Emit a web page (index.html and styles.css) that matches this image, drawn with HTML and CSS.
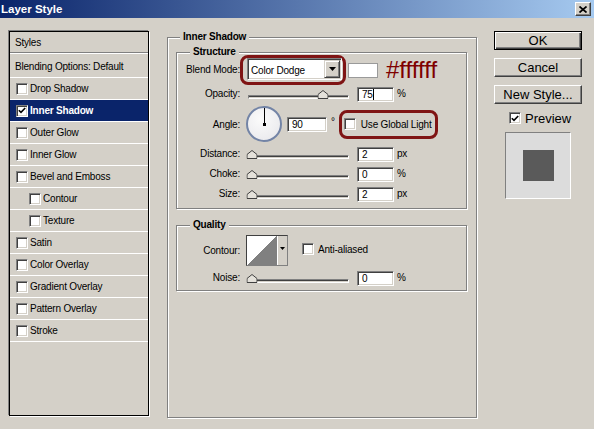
FILE: index.html
```html
<!DOCTYPE html>
<html lang="en">
<head>
    <meta charset="UTF-8">
    <meta name="viewport" content="width=device-width, initial-scale=1.0">
    <title>Layer Style</title>
    <link rel="stylesheet" href="styles.css">
</head>
<body>
    <div class="window">
        <div class="titlebar">
            <span class="title">Layer Style</span>
            <span class="close-btn">
                <svg width="8" height="7" viewBox="0 0 8 7"><path d="M0.5 0.5 L7.5 6.5 M7.5 0.5 L0.5 6.5" stroke="#000" stroke-width="1.7"/></svg>
            </span>
        </div>

        <div class="dialog">
            <!-- effect list -->
            <ul class="style-list">
                <li class="list-head">Styles</li>
                <li class="plain">Blending Options: Default</li>
                <li><span class="check"></span>Drop Shadow</li>
                <li class="selected">
                    <span class="check"><svg width="8" height="7" viewBox="0 0 8 7"><path d="M0.8 3.2 L3 5.4 L7.2 1" stroke="#000" stroke-width="1.6" fill="none"/></svg></span>Inner Shadow
                </li>
                <li><span class="check"></span>Outer Glow</li>
                <li><span class="check"></span>Inner Glow</li>
                <li><span class="check"></span>Bevel and Emboss</li>
                <li class="sub"><span class="check"></span>Contour</li>
                <li class="sub"><span class="check"></span>Texture</li>
                <li><span class="check"></span>Satin</li>
                <li><span class="check"></span>Color Overlay</li>
                <li><span class="check"></span>Gradient Overlay</li>
                <li><span class="check"></span>Pattern Overlay</li>
                <li><span class="check"></span>Stroke</li>
            </ul>

            <!-- settings of the selected effect -->
            <fieldset class="group effect-group">
                <legend>Inner Shadow</legend>

                <fieldset class="group sub-group">
                    <legend>Structure</legend>

                    <div class="row blend-row">
                        <span class="row-label">Blend Mode:</span>
                        <div class="marker mode-marker">
                            <div class="select">
                                <span class="select-value">Color Dodge</span>
                                <span class="drop-btn"><svg width="7" height="4" viewBox="0 0 7 4"><path d="M0 0 H7 L3.5 4 Z"/></svg></span>
                            </div>
                        </div>
                        <span class="swatch"></span>
                        <span class="hex">#ffffff</span>
                    </div>

                    <div class="row opacity-row">
                        <span class="row-label">Opacity:</span>
                        <div class="slider">
                            <div class="track"></div>
                            <div class="rail">
                                <span class="thumb" style="left: 75%"><svg width="11" height="9" viewBox="0 0 11 9"><path d="M5.5 0.5 L10.5 4.5 V8.5 H0.5 V4.5 Z" fill="#e4e1da" stroke="#404040"/></svg></span>
                            </div>
                        </div>
                        <span class="field">75<span class="caret"></span></span>
                        <span class="unit">%</span>
                    </div>

                    <div class="row angle-row">
                        <span class="row-label">Angle:</span>
                        <div class="dial"><span class="hand"></span><span class="pivot"></span></div>
                        <span class="field angle-field">90</span>
                        <span class="deg">°</span>
                        <div class="marker light-marker">
                            <span class="check"></span>Use Global Light
                        </div>
                    </div>

                    <div class="row">
                        <span class="row-label">Distance:</span>
                        <div class="slider">
                            <div class="track"></div>
                            <div class="rail">
                                <span class="thumb" style="left: 0%"><svg width="11" height="9" viewBox="0 0 11 9"><path d="M5.5 0.5 L10.5 4.5 V8.5 H0.5 V4.5 Z" fill="#e4e1da" stroke="#404040"/></svg></span>
                            </div>
                        </div>
                        <span class="field">2</span>
                        <span class="unit">px</span>
                    </div>

                    <div class="row">
                        <span class="row-label">Choke:</span>
                        <div class="slider">
                            <div class="track"></div>
                            <div class="rail">
                                <span class="thumb" style="left: 0%"><svg width="11" height="9" viewBox="0 0 11 9"><path d="M5.5 0.5 L10.5 4.5 V8.5 H0.5 V4.5 Z" fill="#e4e1da" stroke="#404040"/></svg></span>
                            </div>
                        </div>
                        <span class="field">0</span>
                        <span class="unit">%</span>
                    </div>

                    <div class="row">
                        <span class="row-label">Size:</span>
                        <div class="slider">
                            <div class="track"></div>
                            <div class="rail">
                                <span class="thumb" style="left: 0%"><svg width="11" height="9" viewBox="0 0 11 9"><path d="M5.5 0.5 L10.5 4.5 V8.5 H0.5 V4.5 Z" fill="#e4e1da" stroke="#404040"/></svg></span>
                            </div>
                        </div>
                        <span class="field">2</span>
                        <span class="unit">px</span>
                    </div>
                </fieldset>

                <fieldset class="group sub-group quality">
                    <legend>Quality</legend>

                    <div class="row contour-row">
                        <span class="row-label">Contour:</span>
                        <div class="contour-picker">
                            <span class="curve"></span>
                            <span class="curve-btn"><svg width="5" height="3" viewBox="0 0 5 3"><path d="M0 0 H5 L2.5 3 Z"/></svg></span>
                        </div>
                        <span class="option"><span class="check"></span>Anti-aliased</span>
                    </div>

                    <div class="row noise-row">
                        <span class="row-label">Noise:</span>
                        <div class="slider">
                            <div class="track"></div>
                            <div class="rail">
                                <span class="thumb" style="left: 0%"><svg width="11" height="9" viewBox="0 0 11 9"><path d="M5.5 0.5 L10.5 4.5 V8.5 H0.5 V4.5 Z" fill="#e4e1da" stroke="#404040"/></svg></span>
                            </div>
                        </div>
                        <span class="field">0</span>
                        <span class="unit">%</span>
                    </div>
                </fieldset>
            </fieldset>

            <!-- dialog buttons and preview -->
            <div class="actions">
                <span class="btn btn-default">OK</span>
                <span class="btn">Cancel</span>
                <span class="btn">New Style...</span>
                <div class="preview-toggle">
                    <span class="check"><svg width="8" height="7" viewBox="0 0 8 7"><path d="M0.8 3.2 L3 5.4 L7.2 1" stroke="#000" stroke-width="1.6" fill="none"/></svg></span>Preview
                </div>
                <div class="preview-box"><span class="preview-swatch"></span></div>
            </div>
        </div>
    </div>
</body>
</html>
```

FILE: styles.css
```css
body {
    margin: 0;
    background-color: #d4d0c8;
    font-family: "Liberation Sans", Arial, sans-serif;
    font-size: 10px;
    letter-spacing: -0.2px;
    color: #000;
}
.window {
    width: 594px;
    height: 429px;
    overflow: hidden;
}

/* title bar */
.titlebar {
    height: 18px;
    background: linear-gradient(to right, #0a246a, #a6caf0);
    display: flex;
    align-items: center;
    justify-content: space-between;
    padding: 0 3px 0 1px;
}
.title {
    color: #fff;
    font-weight: bold;
    font-size: 11.5px;
    letter-spacing: 0;
}
.close-btn {
    width: 16px;
    height: 14px;
    box-sizing: border-box;
    background-color: #d4d0c8;
    border: 1px solid;
    border-color: #fff #404040 #404040 #fff;
    box-shadow: inset -1px -1px 0 #808080;
    display: flex;
    align-items: center;
    justify-content: center;
}

.dialog {
    display: flex;
    align-items: flex-start;
    padding: 13px 0 0 9px;
}

/* effect list */
.style-list {
    list-style: none;
    margin: 0;
    padding: 0;
    width: 140px;
    height: 385px;
    box-sizing: border-box;
    border: 1px solid #000;
    box-shadow: -1px -1px 0 #808080, 1px 1px 0 #fff;
}
.style-list li {
    display: flex;
    align-items: center;
    gap: 2px;
    height: 22px;
    box-sizing: border-box;
    border-bottom: 1px solid #fff;
    padding-left: 6px;
    white-space: nowrap;
}
.style-list .list-head {
    height: 21px;
    border-bottom-color: #808080;
    box-shadow: 0 1px 0 #fff;
    margin-bottom: 3px;
    padding-left: 5px;
}
.style-list .plain {
    padding-left: 5px;
}
.style-list .sub {
    padding-left: 19px;
}
.style-list .selected {
    background-color: #0a246a;
    color: #fff;
    font-weight: bold;
}

/* classic sunken checkbox */
.check {
    flex: none;
    width: 12px;
    height: 12px;
    box-sizing: border-box;
    background-color: #fff;
    border: 1px solid;
    border-color: #808080 #fff #fff #808080;
    box-shadow: inset 1px 1px 0 #404040, inset -1px -1px 0 #d4d0c8;
    display: inline-flex;
    align-items: center;
    justify-content: center;
}

/* group boxes */
.group {
    margin: 0;
    padding: 0;
    min-width: 0;
    border: 1px solid #808080;
    box-shadow: inset 1px 1px 0 #fff, 1px 1px 0 #fff;
}
.group legend {
    font-weight: bold;
    line-height: 12px;
    padding: 0 3px;
    margin-left: 13px;
    background-color: #d4d0c8;
}
.effect-group {
    margin-left: 18px;
    width: 310px;
    height: 387px;
    box-sizing: border-box;
    padding: 0 9px 0 8px;
}
.effect-group > legend {
    margin-left: 4px;
}
.sub-group {
    margin-top: 3px;
    padding-bottom: 5px;
}
.quality {
    margin-top: 10px;
    padding-bottom: 3px;
}

.row {
    display: flex;
    align-items: center;
    height: 20px;
}
.row-label {
    flex: none;
    width: 63px;
    text-align: right;
}
.blend-row {
    height: 22px;
}
.opacity-row {
    margin-top: 2px;
    height: 22px;
}
.angle-row {
    margin-top: 1px;
    height: 38px;
}

/* hand-drawn red outline */
.marker {
    box-sizing: border-box;
    border: 3px solid #7f1414;
    border-radius: 8px;
}
.mode-marker {
    margin: -3px 0 -5px;
    padding: 0 1px 2px 4px;
}
.light-marker {
    width: 99px;
    height: 29px;
    margin-left: 4px;
    padding-left: 2px;
    display: flex;
    align-items: center;
    gap: 5px;
    white-space: nowrap;
}

.select {
    width: 95px;
    height: 22px;
    box-sizing: border-box;
    background-color: #fff;
    border: 1px solid;
    border-color: #808080 #fff #fff #808080;
    box-shadow: inset 1px 1px 0 #404040, inset -1px -1px 0 #d4d0c8;
    display: flex;
    align-items: stretch;
    padding: 1px;
}
.select-value {
    flex: 1;
    padding: 5px 0 0 2px;
}
.drop-btn {
    width: 16px;
    box-sizing: border-box;
    background-color: #d4d0c8;
    border: 1px solid;
    border-color: #d4d0c8 #404040 #404040 #d4d0c8;
    box-shadow: inset 1px 1px 0 #fff, inset -1px -1px 0 #808080;
    display: flex;
    align-items: center;
    justify-content: center;
}
.swatch {
    align-self: flex-start;
    margin: 5px 0 0 2px;
    width: 30px;
    height: 15px;
    box-sizing: border-box;
    background-color: #fff;
    border: 1px solid #9a9a9a;
}
.hex {
    align-self: flex-start;
    margin: 1px 0 0 8px;
    font-size: 24px;
    line-height: 22px;
    letter-spacing: 0;
    color: #7f0000;
}

/* sliders */
.slider {
    position: relative;
    flex: none;
    width: 101px;
    height: 9px;
    margin: 2px 0 0 8px;
}
.track {
    margin-top: 5px;
    height: 4px;
    box-sizing: border-box;
    border: 1px solid;
    border-color: #808080 #fff #fff #808080;
    background-color: #404040;
    box-shadow: inset 0 -1px 0 #d4d0c8;
}
.rail {
    position: absolute;
    top: 0;
    left: 4px;
    right: 2px;
    height: 9px;
}
.thumb {
    position: absolute;
    top: 0;
    transform: translateX(-50%);
    line-height: 0;
}

/* edit fields */
.field {
    flex: none;
    width: 37px;
    height: 15px;
    margin: 2px 0 0 8px;
    box-sizing: border-box;
    background-color: #fff;
    border: 1px solid;
    border-color: #808080 #fff #fff #808080;
    box-shadow: inset 1px 1px 0 #404040, inset -1px -1px 0 #d4d0c8;
    padding-left: 4px;
    line-height: 13px;
    display: flex;
    align-items: center;
}
.caret {
    width: 1px;
    height: 11px;
    background-color: #000;
}
.unit {
    margin-left: 3px;
}

/* angle dial */
.dial {
    position: relative;
    flex: none;
    width: 36px;
    height: 36px;
    margin-left: 6px;
    box-sizing: border-box;
    border-radius: 50%;
    border: 2px solid #7384a6;
    background: radial-gradient(circle at 40% 35%, #fbfbfb, #e6e6ea);
}
.hand {
    position: absolute;
    left: 16px;
    top: 0;
    width: 1px;
    height: 16px;
    background-color: #000;
}
.pivot {
    position: absolute;
    left: 15px;
    top: 15px;
    width: 3px;
    height: 3px;
    background-color: #000;
}
.angle-field {
    width: 40px;
    margin: 1px 0 0 5px;
}
.deg {
    align-self: flex-start;
    margin: 11px 0 0 4px;
}

/* contour row */
.contour-row {
    margin-top: 3px;
    height: 32px;
}
.noise-row {
    margin-top: 1px;
}
.contour-picker {
    flex: none;
    display: flex;
    width: 42px;
    height: 31px;
    margin-left: 6px;
    box-sizing: border-box;
    border: 1px solid;
    border-color: #404040 #808080 #808080 #404040;
    background-color: #d4d0c8;
}
.curve {
    width: 30px;
    background: linear-gradient(to bottom right, #fff 50%, #808080 50%);
}
.curve-btn {
    flex: 1;
    border-left: 1px solid #fff;
    display: flex;
    align-items: center;
    justify-content: center;
    padding-bottom: 4px;
}
.option {
    display: flex;
    align-items: center;
    gap: 4px;
    margin: 0 0 2px 14px;
}

/* right hand column */
.actions {
    margin-left: 17px;
    width: 88px;
    font-size: 13px;
    letter-spacing: 0;
}
.btn {
    display: flex;
    align-items: center;
    justify-content: center;
    height: 19px;
    box-sizing: border-box;
    margin-bottom: 8px;
    background-color: #d4d0c8;
    border: 1px solid;
    border-color: #fff #404040 #404040 #fff;
    box-shadow: inset -1px -1px 0 #808080;
}
.btn-default {
    border-color: #000;
    box-shadow: inset 1px 1px 0 #fff, inset -1px -1px 0 #404040, inset -2px -2px 0 #808080;
}
.preview-toggle {
    display: flex;
    align-items: center;
    gap: 4px;
    height: 12px;
    margin: 2px 0 0 15px;
}
.preview-box {
    margin: 8px 0 0 11px;
    width: 66px;
    height: 67px;
    box-sizing: border-box;
    background-color: #dcdcdc;
    border: 1px solid;
    border-color: #808080 #fff #fff #808080;
    display: flex;
    align-items: center;
    justify-content: center;
}
.preview-swatch {
    width: 31px;
    height: 31px;
    background-color: #5a5a5a;
}
```
